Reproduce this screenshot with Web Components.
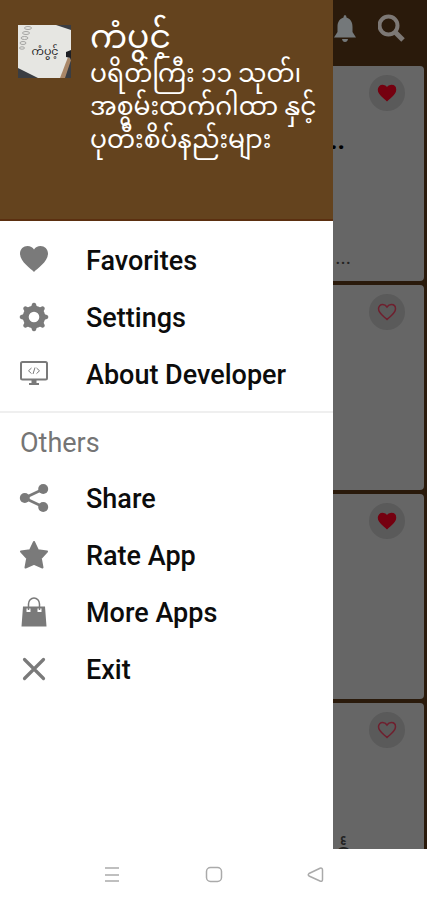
<!DOCTYPE html>
<html lang="my">
<head>
<meta charset="utf-8">
<meta name="viewport" content="width=device-width, initial-scale=1">
<title>ကံပွင့်</title>
<style>
body { margin: 0; font-family: Roboto, "Noto Sans Myanmar", "Noto Sans", sans-serif; background: #fff; }
</style>
</head>
<body>
<app-shell>
  <app-toolbar slot="bar"></app-toolbar>
  <sutta-card slot="cards" liked heading=".." excerpt="..."></sutta-card>
  <sutta-card slot="cards"></sutta-card>
  <sutta-card slot="cards" liked></sutta-card>
  <sutta-card slot="cards" tail="င်္င"></sutta-card>
  <nav-drawer slot="drawer">
    <drawer-header slot="header">
      <span slot="title">ကံပွင့်</span>
      <span slot="subtitle">ပရိတ်ကြီး ၁၁ သုတ်၊ အစွမ်းထက်ဂါထာ နှင့် ပုတီးစိပ်နည်းများ</span>
    </drawer-header>
    <drawer-item icon="heart">Favorites</drawer-item>
    <drawer-item icon="gear">Settings</drawer-item>
    <drawer-item icon="monitor">About Developer</drawer-item>
    <drawer-group>Others</drawer-group>
    <drawer-item icon="share">Share</drawer-item>
    <drawer-item icon="star">Rate App</drawer-item>
    <drawer-item icon="bag">More Apps</drawer-item>
    <drawer-item icon="close">Exit</drawer-item>
  </nav-drawer>
  <system-bar slot="system"></system-bar>
</app-shell>
<script>
const ICONS = {
  heart: '<path fill="currentColor" d="M14 26C11 22.500 0 16 0 7.500C0 3 3.500 0 7.500 0C10.300 0 12.700 1.300 14 3.500C15.300 1.300 17.700 0 20.500 0C24.500 0 28 3 28 7.500C28 16 17 22.500 14 26Z"/>',
  gear: '<g fill="currentColor"><path fill-rule="evenodd" d="M14 2.800a11.200 11.200 0 1 0 0 22.400a11.200 11.200 0 1 0 0-22.400ZM14 8.700a5.300 5.300 0 1 1 0 10.600a5.300 5.300 0 1 1 0-10.600Z"/>' +
    [0,45,90,135,180,225,270,315].map(a => `<path d="M10.800 5L12 1Q12.500 -0.300 14 -0.300Q15.500 -0.300 16 1L17.200 5Z" transform="rotate(${a} 14 14)"/>`).join('') + '</g>',
  monitor: '<g fill="none" stroke="currentColor"><rect x="1" y="2" width="26" height="17.500" rx="1.500" stroke-width="2"/><path stroke-width="1" d="M11.500 8L8.500 10.800L11.500 13.600M16.500 8L19.500 10.800L16.500 13.600M15 7.500L13 14"/></g><path fill="currentColor" d="M11.500 20h5v3h2.500v2h-10v-2h2.500Z"/>',
  share: '<path d="M4.500 14L23.500 5M4.500 14L23.500 23" stroke="currentColor" stroke-width="2.600"/><g fill="currentColor"><circle cx="4.800" cy="14" r="5"/><circle cx="23.200" cy="5" r="5"/><circle cx="23.200" cy="23" r="5"/></g>',
  star: '<path fill="currentColor" stroke="currentColor" stroke-width="2" stroke-linejoin="round" d="M14 1L17.900 9.300L27 10.600L20.800 17.200L22.500 26.500L14 22.800L5.500 26.500L7.200 17.200L1 10.600L10.100 9.300Z"/>',
  bag: '<path d="M8.500 12V6a5.500 6 0 0 1 11 0v6" fill="none" stroke="currentColor" stroke-width="1.500"/><path fill="currentColor" fill-rule="evenodd" d="M3 8.500H25L26.500 28.500H1.500ZM6.500 10.500V14H10.500V10.500ZM17.500 10.500V14H21.500V10.500Z"/>',
  close: '<path d="M4.500 4.500L23.500 23.500M23.500 4.500L4.500 23.500" stroke="currentColor" stroke-width="3.200" stroke-linecap="round"/>'
};

function define(name, html, setup) {
  const t = document.createElement('template');
  t.innerHTML = html;
  customElements.define(name, class extends HTMLElement {
    connectedCallback() {
      if (this.shadowRoot) return;
      this.attachShadow({ mode: 'open' }).append(t.content.cloneNode(true));
      if (setup) setup(this, this.shadowRoot);
    }
  });
}

define('app-shell', `
<style>
:host { display: flex; flex-direction: column; height: 100vh; }
.stage { position: relative; flex: 1; min-height: 0; overflow: hidden; background: #2a1a0b; display: flex; flex-direction: column; }
.list { display: flex; flex-direction: column; flex: none; gap: 4px; padding: 0 3px; }
</style>
<div class="stage">
  <slot name="bar"></slot>
  <main class="list"><slot name="cards"></slot></main>
  <slot name="drawer"></slot>
</div>
<slot name="system"></slot>`);

define('app-toolbar', `
<style>
:host { display: flex; flex: none; justify-content: flex-end; align-items: center; padding: 12px 21px 22px; gap: 17px; color: #7d7875; }
button { all: unset; display: flex; }
</style>
<button aria-label="Notifications"><svg width="32" height="32" viewBox="0 0 32 32"><path fill="#74787a" d="M16 3Q17.500 3 17.500 5.500C22 7 23.500 10.500 23.500 15V20L27 25.500H5L8.500 20V15C8.500 10.500 10 7 14.500 5.500Q14.500 3 16 3ZM13 27H19Q18.500 30 16 30Q13.500 30 13 27Z"/></svg></button>
<button aria-label="Search"><svg width="28" height="28" viewBox="0 0 28 28"><circle cx="10.500" cy="11.500" r="9" fill="none" stroke="currentColor" stroke-width="4"/><path d="M17 18L25 26" stroke="currentColor" stroke-width="5"/></svg></button>`);

define('sutta-card', `
<style>
:host { display: grid; grid-template-columns: 1fr auto; grid-template-rows: auto 1fr auto; box-sizing: border-box; flex: none; height: 205px; padding: 9px 19px 12px 10px; background: #666; border-radius: 4px; color: #000; }
:host([heading]) { height: 215px; }
button { all: unset; grid-area: 1 / 2; display: grid; place-items: center; width: 36px; height: 36px; border-radius: 50%; background: #5a5a5a; }
h2, p { margin: 0; text-align: right; }
h2 { grid-area: 2 / 1; font-size: 26px; line-height: 30px; padding: 14px 24px 0 0; }
p { grid-area: 3 / 1; font-size: 20px; line-height: 24px; padding-right: 18px; color: #222; }
.tail { font-size: 24px; padding-bottom: 32px; }
</style>
<button aria-label="Favorite"><svg width="20" height="18" viewBox="0 0 20 18"><path stroke-width="1.500" d="M10 16.500C7 13.500 1.500 10.500 1.500 5.800C1.500 3.200 3.300 1.500 5.600 1.500C7.500 1.500 9 2.500 10 4C11 2.500 12.500 1.500 14.400 1.500C16.700 1.500 18.500 3.200 18.500 5.800C18.500 10.500 13 13.500 10 16.500Z"/></svg></button>
<h2></h2><p></p>`, (el, root) => {
  const path = root.querySelector('path');
  const liked = el.hasAttribute('liked');
  path.setAttribute('fill', liked ? '#750010' : 'none');
  path.setAttribute('stroke', liked ? '#750010' : '#6f1f2e');
  root.querySelector('h2').textContent = el.getAttribute('heading') || '';
  const p = root.querySelector('p');
  p.textContent = el.getAttribute('excerpt') || el.getAttribute('tail') || '';
  if (el.hasAttribute('tail')) p.className = 'tail';
});

define('nav-drawer', `
<style>
:host { position: absolute; inset: 0 auto 0 0; width: 78%; background: #fff; overflow: hidden; }
nav { display: flex; flex-direction: column; padding-top: 10px; }
</style>
<slot name="header"></slot>
<nav><slot></slot></nav>`);

define('drawer-header', `
<style>
:host { display: flex; gap: 19px; align-items: flex-start; box-sizing: border-box; min-height: 221px; padding: 17px 8px 0 18px; background: #64431e; border-bottom: 2px solid #5b2f10; color: #fff; }
svg { flex: none; margin-top: 8px; }
.t { display: flex; flex-direction: column; min-width: 0; }
h1, p { margin: 0; font-weight: 400; }
h1 { font-size: 33px; line-height: 40px; }
p { font-size: 25px; line-height: 33px; }
</style>
<svg width="53" height="53" viewBox="0 0 53 53" role="img" aria-label="ကံပွင့်">
  <rect width="53" height="53" fill="#e6e6e2"/>
  <path fill="#3a3d42" d="M38 0H53V5ZM0 43L20 53H0ZM53 26V53H44L51 36Z"/>
  <path fill="#a98768" d="M50 32L53 35L47 53H42Z"/>
  <path fill="#1d1f24" d="M48 27L53 25V33L48 32Z"/>
  <g fill="none" stroke="#a5a5a3" stroke-width="1"><ellipse cx="10" cy="3" rx="3.500" ry="1.500"/><ellipse cx="8" cy="8" rx="3.500" ry="1.500"/><ellipse cx="6.500" cy="13" rx="3.500" ry="1.500"/><ellipse cx="5" cy="18" rx="3" ry="1.500"/><ellipse cx="4" cy="23" rx="2.500" ry="1.200"/></g>
  <text x="27" y="30" text-anchor="middle" font-size="11" fill="#222">ကံပွင့်</text>
</svg>
<div class="t"><h1><slot name="title"></slot></h1><p><slot name="subtitle"></slot></p></div>`);

define('drawer-item', `
<style>
:host { display: block; color: #0c0c0c; }
a { display: flex; align-items: center; gap: 38px; height: 57px; padding-left: 20px; color: inherit; text-decoration: none; font-size: 27px; line-height: 32px; font-weight: 500; }
span { padding-top: 2px; }
svg { flex: none; color: #7a7a7a; overflow: visible; }
</style>
<a href="#"><svg width="28" height="28" viewBox="0 0 28 28" aria-hidden="true"></svg><span><slot></slot></span></a>`, (el, root) => {
  root.querySelector('svg').innerHTML = ICONS[el.getAttribute('icon')];
});

define('drawer-group', `
<style>
:host { display: block; margin-top: 9px; border-top: 2px solid #efefef; }
h2 { margin: 0; padding: 13px 20px 9px; font-size: 27px; line-height: 34px; font-weight: 400; color: #757575; }
</style>
<h2><slot></slot></h2>`);

define('system-bar', `
<style>
:host { display: flex; flex: none; align-items: center; justify-content: center; gap: 78px; height: 51px; background: #fff; color: #aaa; }
button { all: unset; display: flex; }
svg { fill: none; stroke: currentColor; stroke-width: 1.5; }
</style>
<button aria-label="Recent"><svg width="24" height="24" viewBox="0 0 24 24"><path d="M5 5H19M5 12H19M5 18H19"/></svg></button>
<button aria-label="Home"><svg width="24" height="24" viewBox="0 0 24 24"><rect x="4.500" y="4.500" width="15" height="14" rx="4"/></svg></button>
<button aria-label="Back"><svg width="24" height="24" viewBox="0 0 24 24"><path stroke-linejoin="round" d="M5 10.500L16 5.200Q18.500 4.500 18.500 7V16.500Q18.500 19 16 18L5 13Q3.500 11.800 5 10.500Z"/></svg></button>`);
</script>
</body>
</html>
